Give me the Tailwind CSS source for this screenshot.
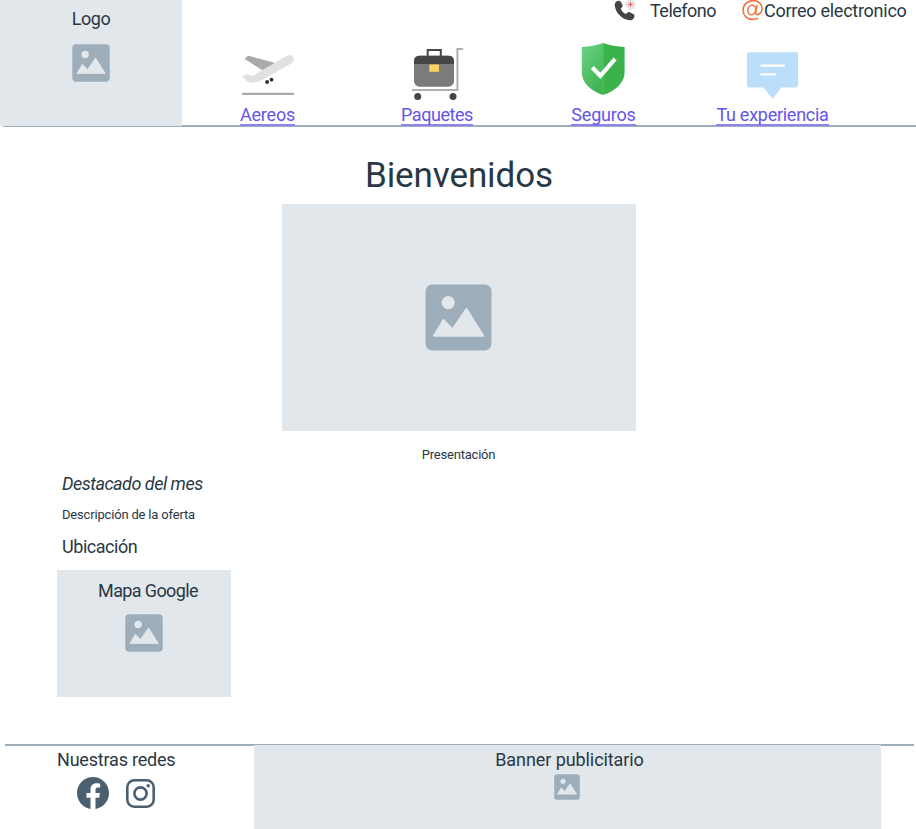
<!DOCTYPE html>
<html lang="es">
<head>
<meta charset="utf-8">
<title>Bienvenidos</title>
<script src="https://cdn.jsdelivr.net/npm/@tailwindcss/browser@4"></script>
</head>
<body class="bg-white">
<svg class="hidden">
  <symbol id="image" viewBox="-0.5 -0.5 67 67">
    <rect width="66" height="66" rx="7" fill="#9eadba"/>
    <circle cx="22.7" cy="18.2" r="6.6" fill="#e2e7eb"/>
    <path d="M8 51.5 17.9 35 27 44.5 41 24 58.3 51.5Z" fill="#e2e7eb" stroke="#e2e7eb" stroke-width="1.4" stroke-linejoin="round"/>
  </symbol>
</svg>
<div class="w-[916px] h-[829px] overflow-hidden flex flex-col bg-white text-[#293845] text-[18px] leading-6" style="font-family:Roboto,'Liberation Sans',sans-serif">

  <header class="flex h-[126px] shrink-0">
    <div class="relative z-10 w-[182px] h-[126px] bg-[#e2e7eb] flex flex-col items-center pt-[7px]">
      <span class="tracking-[-0.4px]">Logo</span>
      <svg class="w-[38px] h-[38px] mt-[13px]"><use href="#image"/></svg>
    </div>
    <div class="flex-1 flex flex-col">
      <div class="h-[22px] flex justify-end leading-[22px] whitespace-nowrap">
        <svg class="w-[24px] h-[22px]" viewBox="613 0 24 22">
          <circle cx="630.5" cy="4.5" r="5" fill="#e4e4e4"/>
          <path d="M630.5 2.2v4.6M628.2 4.5h4.6" stroke="#ee5a4a" stroke-width="1.1"/>
          <path d="M616.3 1.4Q618.5.2 620.3.9L622.8 5.6Q622.8 7 620.7 8.6C621.5 11 623.3 12.8 625.7 14L628 12.3Q629 11.8 630 12.3L634 14.5Q634.9 15.2 634.3 17.2Q633 20.3 629.8 20.3C622 19.5 615.5 13 614.7 5Q614.6 2.6 616.3 1.4Z" fill="#454545"/>
        </svg>
        <span class="w-[91px] pl-[13px] tracking-[-0.5px]">Telefono</span>
        <svg class="w-[22px] h-[22px] ml-[13px]" viewBox="741 0 22 22" fill="none" stroke="#ee7645" stroke-width="1.6" stroke-linecap="round">
          <ellipse cx="751.7" cy="10" rx="3.9" ry="4.8" transform="rotate(14 751.7 10)"/>
          <path d="M757 5.3 755.6 12.3Q755.4 14.8 757.6 14.6C760.3 14 762 11.6 762 8.6C761.9 3.6 758 .6 753 .6C747.3.6 743.1 4.8 743.1 10.3C743.1 15.7 747 19.4 752.4 19.4Q755.2 19.4 757.5 18.4"/>
        </svg>
        <span class="w-[153px] pl-px tracking-[-0.26px]">Correo electronico</span>
      </div>
      <nav class="grid grid-cols-[171px_168px_165px_173px] justify-items-center pt-5 whitespace-nowrap text-[#6554e8]">
        <a class="relative z-10 flex flex-col items-center">
          <svg class="w-[60px] h-[60px]" viewBox="238.3 42 60 60">
            <path d="M245.6 59.3Q245 58.6 245.8 57.8L247.7 56.2Q248.5 55.6 250 56L275.5 63 263 70.5Z" fill="#aaa"/>
            <path d="M254 75.2 287.5 55.6C290.5 54 293.4 55.4 294 58.2C294.4 60.6 293.3 62.5 291.5 63.6L262.5 80C257.5 82.8 252 83.3 248.5 81.8Q246.5 80.8 242.9 77.2Q242.3 76.2 243.4 75.6L246.5 74.5Q248 74 249.5 74.9Q251.5 76 254 75.2Z" fill="#e1e1e1"/>
            <circle cx="267.4" cy="82" r="1.9" fill="#2d2d2d"/><circle cx="271.8" cy="79.7" r="1.9" fill="#2d2d2d"/>
            <path d="M243.3 93.8H293.5" stroke="#aaa" stroke-width="2.2" stroke-linecap="round"/>
          </svg>
          <span class="mt-px h-[23px] border-b-2 border-[#8d82ee] tracking-[-0.2px]">Aereos</span>
        </a>
        <a class="relative z-10 flex flex-col items-center">
          <svg class="w-[60px] h-[60px]" viewBox="407 42 60 60">
            <path d="M427.7 56.5V50H440.8V56.5" fill="none" stroke="#454545" stroke-width="2"/>
            <rect x="414" y="55.7" width="40" height="31" rx="5.5" fill="#7b7b7b"/>
            <path d="M414 64V61.2Q414 55.7 419.5 55.7H448.5Q454 55.7 454 61.2V64Z" fill="#454545"/>
            <rect x="429.3" y="64.6" width="9.7" height="7.2" rx=".6" fill="#fcd462"/>
            <path d="M462.3 49H457.4V90H412.7" fill="none" stroke="#b0b0b0" stroke-width="2" stroke-linecap="round"/>
            <circle cx="417.7" cy="96.6" r="3.5" fill="#454545"/><circle cx="453" cy="96.6" r="3.5" fill="#454545"/>
          </svg>
          <span class="mt-px h-[23px] border-b-2 border-[#8d82ee] tracking-[-0.45px]">Paquetes</span>
        </a>
        <a class="relative z-10 flex flex-col items-center">
          <svg class="w-[60px] h-[60px]" viewBox="574.2 42 60 60">
            <defs><linearGradient id="leaf" x1="0" y1="0" x2=".6" y2="1"><stop offset="0" stop-color="#6cd386"/><stop offset="1" stop-color="#40b552"/></linearGradient></defs>
            <path d="M603.3 43C597 45.4 589.5 46.7 582 46.9V72.5C582 82 590 90.5 603.3 95Z" fill="url(#leaf)"/>
            <path d="M603.3 43C609.6 45.4 617.1 46.7 624.8 46.9V72.5C624.8 82 616.6 90.5 603.3 95Z" fill="#3cb34a"/>
            <path d="M592.5 67.5 600.6 75.8 615.3 58.8" fill="none" stroke="#fff" stroke-width="4.2"/>
          </svg>
          <span class="mt-px h-[23px] border-b-2 border-[#8d82ee] tracking-[-0.2px]">Seguros</span>
        </a>
        <a class="relative z-10 flex flex-col items-center">
          <svg class="w-[60px] h-[60px]" viewBox="742 42 60 60">
            <path d="M749 52.2H796Q798 52.2 798 54.2V85.5Q798 87.5 796 87.5H781.5L772.6 98.8 763.5 87.5H749Q747 87.5 747 85.5V54.2Q747 52.2 749 52.2Z" fill="#bbdefb"/>
            <path d="M761.3 65.6H784M761.3 74.3H775" stroke="#fff" stroke-width="2.2" stroke-linecap="round"/>
          </svg>
          <span class="mt-px h-[23px] border-b-2 border-[#8d82ee] tracking-[-0.27px]">Tu experiencia</span>
        </a>
      </nav>
    </div>
  </header>
  <div class="h-0.5 shrink-0 -mt-px ml-[3px] bg-[#9eadba]"></div>

  <main class="h-[617px] shrink-0 flex flex-col">
    <section class="ml-[282px] w-[354px] flex flex-col items-center pt-[29px]">
      <h1 class="text-[35px] leading-10 tracking-[-0.1px]">Bienvenidos</h1>
      <div class="mt-2 w-[354px] h-[227px] bg-[#e2e7eb] flex justify-center pt-20 pr-px">
        <svg class="w-[67px] h-[67px]"><use href="#image"/></svg>
      </div>
      <p class="mt-4 mr-px text-[13px] leading-4 tracking-[-0.2px]">Presentación</p>
    </section>
    <section class="mt-[9px] pl-[62px] flex flex-col">
      <h2 class="italic tracking-[-0.5px]">Destacado del mes</h2>
      <p class="mt-[11px] text-[13px] leading-4 tracking-[-0.18px]">Descripción de la oferta</p>
      <h2 class="mt-3 tracking-[-0.45px]">Ubicación</h2>
    </section>
    <div class="ml-[57px] mt-[11px] w-[174px] h-[127px] bg-[#e2e7eb] flex flex-col items-center pt-[9px]">
      <span class="ml-2 tracking-[-0.62px]">Mapa Google</span>
      <svg class="w-[38px] h-[38px] mt-[11px]"><use href="#image"/></svg>
    </div>
  </main>

  <div class="h-0.5 shrink-0 ml-[5px] mr-0.5 bg-[#9eadba]"></div>
  <footer class="relative -mt-px h-[84px] shrink-0 flex">
    <div class="w-[254px] pl-[57px] pt-[3px]">
      <h2 class="tracking-[-0.2px]">Nuestras redes</h2>
      <div class="flex items-center gap-[17px] pl-5 mt-[5px]">
        <svg class="w-8 h-8" viewBox="0 0 24 24" fill="#4c5f6f"><path d="M24 12.07C24 5.4 18.63 0 12 0S0 5.4 0 12.07C0 18.1 4.39 23.09 10.13 24v-8.44H7.08v-3.49h3.05V9.41c0-3.02 1.79-4.69 4.53-4.69 1.31 0 2.68.24 2.68.24v2.97h-1.51c-1.49 0-1.96.93-1.96 1.89v2.25h3.33l-.53 3.49h-2.8V24C19.61 23.09 24 18.1 24 12.07Z"/></svg>
        <svg class="w-[29px] h-[29px]" viewBox="0 0 29 29" fill="none" stroke="#4c5f6f" stroke-width="2.6"><rect x="1.3" y="1.3" width="26.4" height="26.4" rx="7"/><circle cx="14.5" cy="14.5" r="6.1"/><circle cx="22.2" cy="6.8" r="1.75" fill="#4c5f6f" stroke="none"/></svg>
      </div>
    </div>
    <div class="w-[627px] bg-[#e2e7eb] flex flex-col items-center pt-[3px]">
      <span class="ml-1 tracking-[-0.08px]">Banner publicitario</span>
      <svg class="w-[26px] h-[26px] mt-0.5 mr-px"><use href="#image"/></svg>
    </div>
  </footer>
</div>
</body>
</html>
